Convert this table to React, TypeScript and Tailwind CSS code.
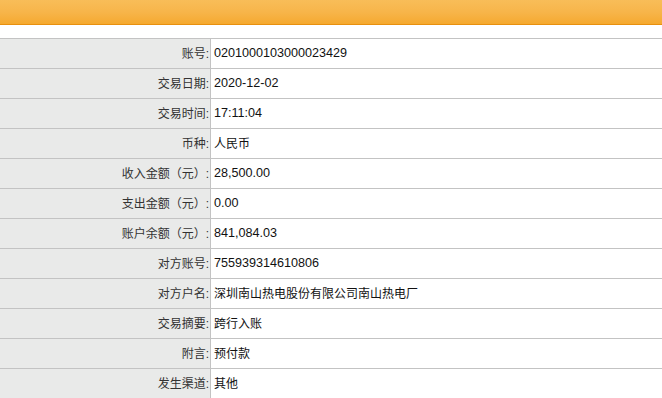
const rows: [string, string][] = [
  ["账号:", "0201000103000023429"],
  ["交易日期:", "2020-12-02"],
  ["交易时间:", "17:11:04"],
  ["币种:", "人民币"],
  ["收入金额（元）:", "28,500.00"],
  ["支出金额（元）:", "0.00"],
  ["账户余额（元）:", "841,084.03"],
  ["对方账号:", "755939314610806"],
  ["对方户名:", "深圳南山热电股份有限公司南山热电厂"],
  ["交易摘要:", "跨行入账"],
  ["附言:", "预付款"],
  ["发生渠道:", "其他"],
];

// latin runs render slightly wider than the CJK ones in the original
function Value({ text }: { text: string }) {
  const parts = text.split(/([\x00-\x7f]+)/).filter(Boolean);
  return (
    <>
      {parts.map((p, i) =>
        /^[\x00-\x7f]+$/.test(p) ? (
          <span key={i} className="text-[12.6px]">
            {p}
          </span>
        ) : (
          <span key={i}>{p}</span>
        )
      )}
    </>
  );
}

export default function App() {
  return (
    <div
      className="w-[662px] h-[398px] overflow-hidden bg-white text-[12px]"
      style={{ fontFamily: '"Liberation Sans", "Noto Sans CJK SC", sans-serif' }}
    >
      {/* Header bar */}
      <div className="h-[25px] bg-gradient-to-b from-[#f8bd58] via-[#f7b54a] to-[#f5a92e] border-b border-[#e8900e]" />

      <div className="mt-[13px] border-t border-[#c3c3c3]">
        {rows.map(([label, value]) => (
          <div key={label} className="flex h-[30px] border-b border-[#c3c3c3]">
            <div className="w-[211px] shrink-0 bg-[#e9eae9] border-r border-[#c3c3c3] flex items-center justify-end pr-[1px] text-[#333]">
              {label}
            </div>
            <div className="flex-1 flex items-center pl-[3px] text-[#111]">
              <Value text={value} />
            </div>
          </div>
        ))}
      </div>
    </div>
  );
}
